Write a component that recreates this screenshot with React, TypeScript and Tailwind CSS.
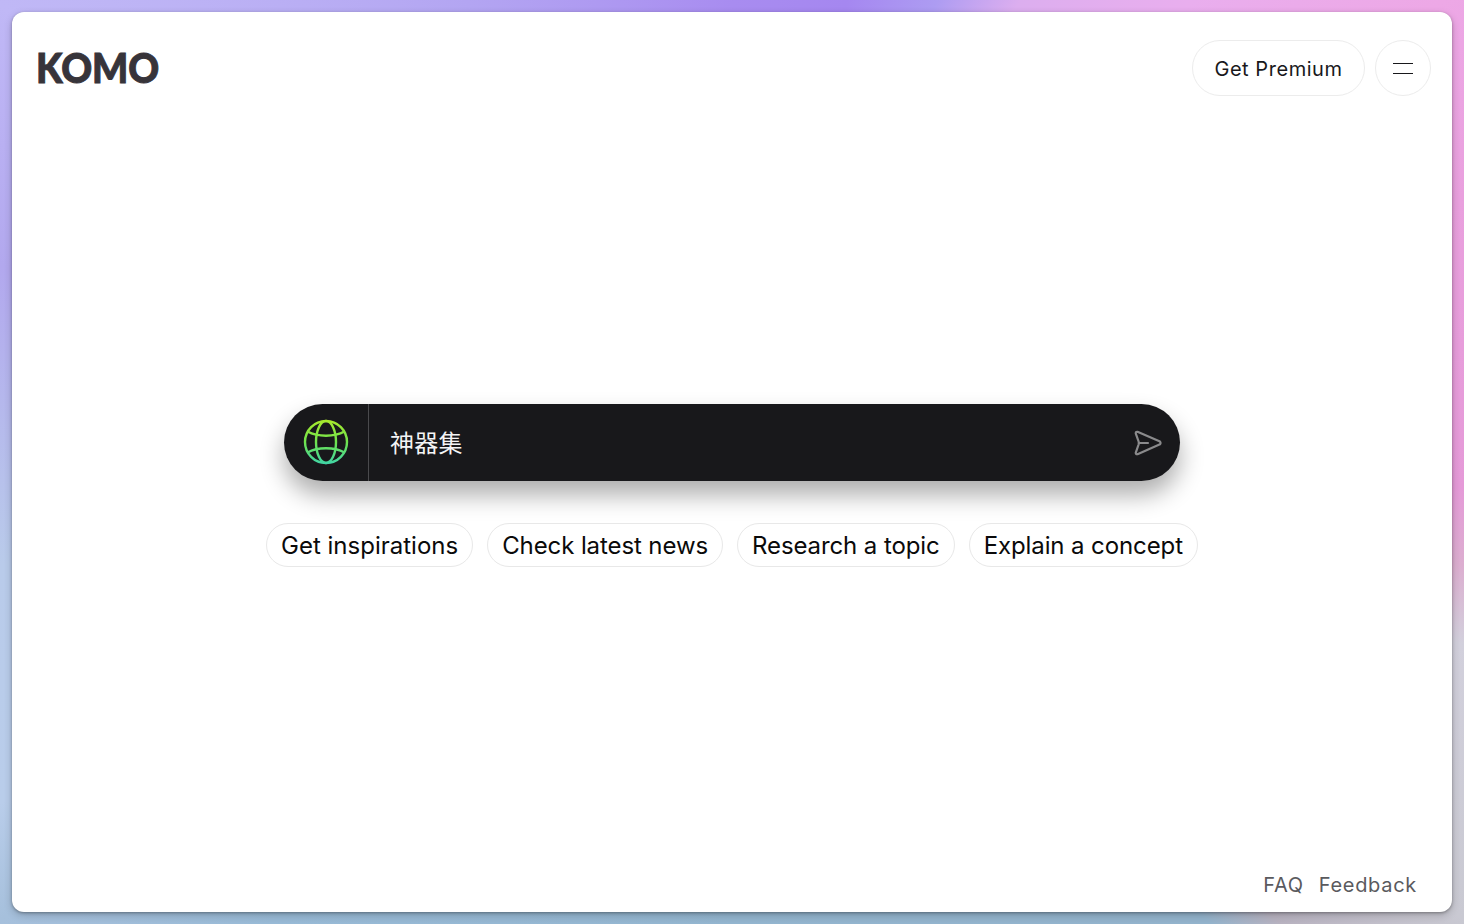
import React from "react";

const suggestions = [
  { label: "Get inspirations", tracking: "tracking-[0px]" },
  { label: "Check latest news", tracking: "tracking-[-0.1px]" },
  { label: "Research a topic", tracking: "tracking-[-0.1px]" },
  { label: "Explain a concept", tracking: "tracking-[-0.1px]" },
];

function Globe() {
  return (
    <svg width="46" height="46" viewBox="0 0 46 46" fill="none" stroke="url(#globeGrad)" strokeWidth="2.4">
      <defs>
        <linearGradient id="globeGrad" x1="23" y1="1" x2="23" y2="45" gradientUnits="userSpaceOnUse">
          <stop offset="0" stopColor="#a8e92c" />
          <stop offset="0.5" stopColor="#6fe34e" />
          <stop offset="1" stopColor="#40d4a6" />
        </linearGradient>
      </defs>
      <circle cx="23" cy="23" r="21" />
      <ellipse cx="23" cy="23" rx="10" ry="21" />
      <path d="M4.5 12.5C10 15.5 16 16.7 23 16.7S36 15.5 41.5 12.5" />
      <path d="M4.5 33.5C10 30.5 16 29.3 23 29.3S36 30.5 41.5 33.5" />
    </svg>
  );
}

function Send() {
  return (
    <svg width="28" height="26" viewBox="0 0 28 26" fill="none" stroke="#8a8a8c" strokeWidth="2.2" strokeLinejoin="round" strokeLinecap="round">
      <path d="M3.5 1.8 L26 11.6 Q27 13 26 14.2 L3.5 24.2 Q1.6 24.6 1.8 22.6 L4.6 14.5 Q5 13 4.6 11.5 L1.8 3.6 Q1.6 1.4 3.5 1.8 Z" />
      <path d="M5 13 H14" />
    </svg>
  );
}

export default function App() {
  return (
    <div className="h-[924px] w-[1464px] overflow-hidden p-3 bg-[conic-gradient(from_0deg_at_50%_50%,#a88cf0_0deg,#a587f0_14deg,#ad9cf2_24deg,#dcaeef_32deg,#e9aeee_45deg,#eda8e6_57deg,#e9a0de_70deg,#e59ad8_92deg,#dcaed0_98deg,#d2d0dc_104deg,#c9c9d2_122deg,#b8b2c0_130deg,#93b3cc_134deg,#93b5cf_180deg,#98bad6_225deg,#a6c0dc_238deg,#b9cdea_245deg,#b9cbea_262deg,#b2a8ee_285deg,#c0b8f6_302deg,#b3a5f2_330deg,#a88cf0_360deg)]">
      <div className="flex h-[900px] w-[1440px] flex-col rounded-[12px] bg-white font-['Inter',sans-serif] shadow-[0_1px_3px_rgba(0,0,0,0.3),0_3px_8px_rgba(0,0,0,0.2)]">
        <header className="flex items-center justify-between pl-[24px] pr-[21px] pt-[28px]">
          <span className="origin-left scale-x-[0.93] font-['Lato',sans-serif] text-[41px] font-black leading-[56px] text-[#37343a] [-webkit-text-stroke:1px_#37343a]">
            KOMO
          </span>
          <div className="flex items-center gap-[10px]">
            <button className="h-[56px] w-[173px] rounded-full border border-[#ececec] pt-[2px] text-[20px] tracking-[0.55px] text-[#18181b]">
              Get Premium
            </button>
            <button className="flex h-[56px] w-[56px] flex-col items-center justify-center gap-[9px] rounded-full border border-[#ececec]">
              <span className="h-px w-[20px] bg-[#18181b]" />
              <span className="h-px w-[20px] bg-[#18181b]" />
            </button>
          </div>
        </header>

        <main className="flex flex-col items-center pt-[308px]">
          <div className="flex h-[77px] w-[896px] items-center rounded-full bg-[#18181b] shadow-[0_14px_24px_rgba(0,0,0,0.32)]">
            <div className="flex h-full w-[85px] items-center justify-center border-r border-[#4a4a4d] pb-[2px] pr-[1px]">
              <Globe />
            </div>
            <span className="flex-1 pl-[21px] pt-[2px] font-['Inter','Noto_Sans_CJK_SC',sans-serif] text-[24px] tracking-[0.3px] text-[#f4f4f5]">
              神器集
            </span>
            <div className="pr-[18px] pt-[1px]">
              <Send />
            </div>
          </div>
          <div className="mt-[42px] flex gap-[14px]">
            {suggestions.map((s) => (
              <button
                key={s.label}
                className={`h-[44px] rounded-full border border-[#e8e8e8] px-[14px] pt-[2px] text-[24px] text-[#0a0a0a] ${s.tracking}`}
              >
                {s.label}
              </button>
            ))}
          </div>
        </main>

        <footer className="mt-auto flex justify-end gap-[15px] pb-[12px] pr-[35px] text-[20px] tracking-[0.7px] text-[#5a5a5e]">
          <span>FAQ</span>
          <span>Feedback</span>
        </footer>
      </div>
    </div>
  );
}
